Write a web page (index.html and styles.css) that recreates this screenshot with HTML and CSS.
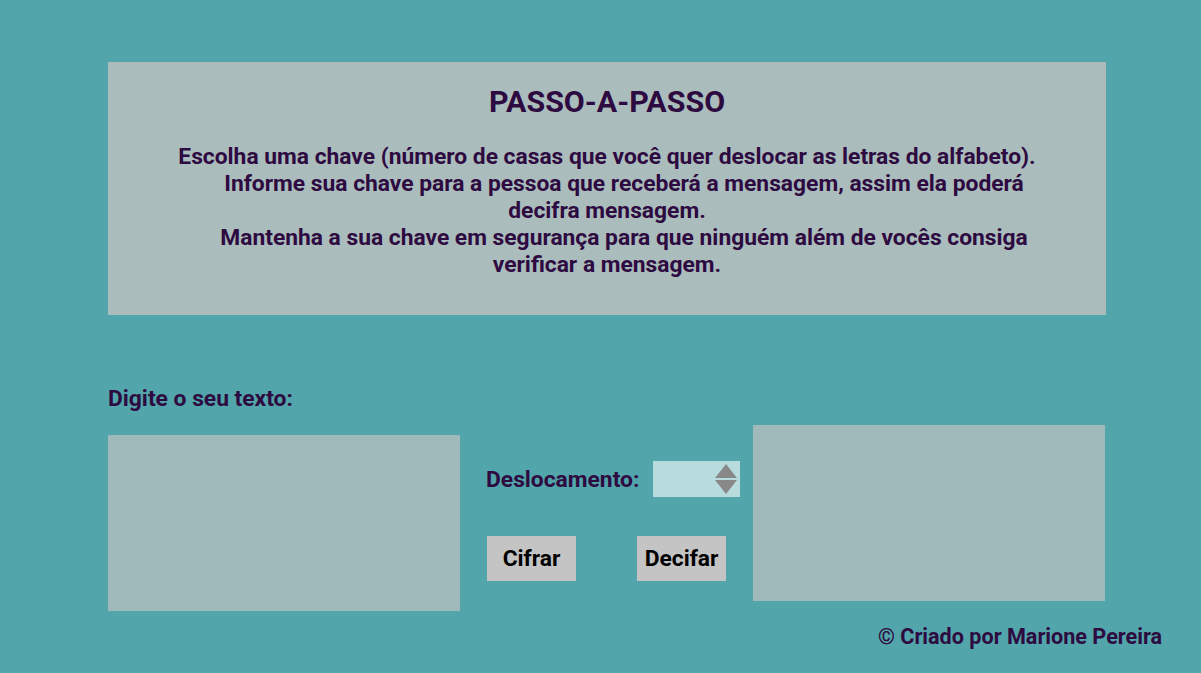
FILE: index.html
```html
<!DOCTYPE html>
<html lang="pt-BR">
<head>
<meta charset="utf-8">
<title>Cifra de César</title>
<link rel="stylesheet" href="styles.css">
</head>
<body>
<section class="panel">
  <h1 class="panel-title">PASSO-A-PASSO</h1>
  <div class="steps">
    <p class="step">Escolha uma chave (número de casas que você quer deslocar as letras do alfabeto).</p>
    <p class="step step-indent">Informe sua chave para a pessoa que receberá a mensagem, assim ela poderá decifra mensagem.</p>
    <p class="step step-indent">Mantenha a sua chave em segurança para que ninguém além de vocês consiga verificar a mensagem.</p>
  </div>
</section>

<main class="workspace">
  <div class="col-input">
    <label class="field-label" for="texto">Digite o seu texto:</label>
    <textarea id="texto" class="textbox"></textarea>
  </div>
  <div class="col-controls">
    <div class="offset-row">
      <label class="offset-label" for="offset">Deslocamento:</label>
      <div class="number-box">
        <input id="offset" class="number-input" type="text">
        <span class="spinner">
          <svg width="24" height="32" viewBox="0 0 24 32"><polygon points="12,1 23,15 1,15" fill="#888"/><polygon points="1,17 23,17 12,31" fill="#888"/></svg>
        </span>
      </div>
    </div>
    <div class="button-row">
      <button class="btn" type="button">Cifrar</button>
      <button class="btn" type="button">Decifar</button>
    </div>
  </div>
  <textarea class="textbox textbox-out" readonly></textarea>
</main>

<footer class="footer">© Criado por Marione Pereira</footer>
</body>
</html>
```

FILE: styles.css
```css
html, body {
  margin: 0;
  padding: 0;
}
body {
  background: #52a5aa;
  color: #2d0a40;
  font-family: Roboto, "Liberation Sans", sans-serif;
  font-weight: 700;
  width: 1201px;
  height: 673px;
  overflow: hidden;
}
.panel {
  box-sizing: border-box;
  width: 998px;
  height: 253px;
  margin: 62px 0 0 108px;
  background: #abbcbd;
  padding-top: 22px;
  text-align: center;
}
.panel-title {
  margin: 0;
  font-size: 30.4px;
  line-height: 36px;
  font-weight: 700;
}
.steps {
  width: 880px;
  margin: 23px auto 0;
}
.step {
  margin: 0;
  font-size: 22.8px;
  line-height: 27px;
}
.step-indent {
  text-indent: 34px;
}
.workspace {
  display: flex;
  align-items: flex-start;
  margin: 70px 0 0 108px;
}
.col-input {
  display: flex;
  flex-direction: column;
}
.field-label {
  font-size: 22.8px;
  line-height: 28px;
  margin-bottom: 22px;
}
.textbox {
  box-sizing: border-box;
  width: 352px;
  height: 176px;
  border: none;
  background: #a0babb;
  resize: none;
  padding: 0;
  margin: 0;
  display: block;
}
.textbox-out {
  margin: 40px 0 0 0;
}
.col-controls {
  display: flex;
  flex-direction: column;
  margin: 76px 14px 0 26px;
  width: 253px;
}
.offset-row {
  display: flex;
  align-items: center;
  height: 36px;
}
.offset-label {
  font-size: 22.8px;
  margin-right: 14px;
}
.number-box {
  display: flex;
  align-items: center;
  width: 87px;
  height: 36px;
  background: #b8dcdd;
}
.number-input {
  flex: 1;
  min-width: 0;
  border: none;
  background: transparent;
  height: 36px;
  padding: 0;
}
.spinner {
  display: flex;
  margin-right: 2px;
}
.button-row {
  display: flex;
  gap: 61px;
  margin-top: 39px;
  padding-left: 1px;
}
.btn {
  width: 89px;
  height: 45px;
  border: none;
  background: #c4c4c4;
  color: #000;
  font-family: Roboto, "Liberation Sans", sans-serif;
  font-weight: 700;
  font-size: 22.8px;
  padding: 0;
}
.footer {
  text-align: right;
  font-size: 21.6px;
  line-height: 26px;
  padding-right: 39px;
  margin-top: 13px;
}
```
